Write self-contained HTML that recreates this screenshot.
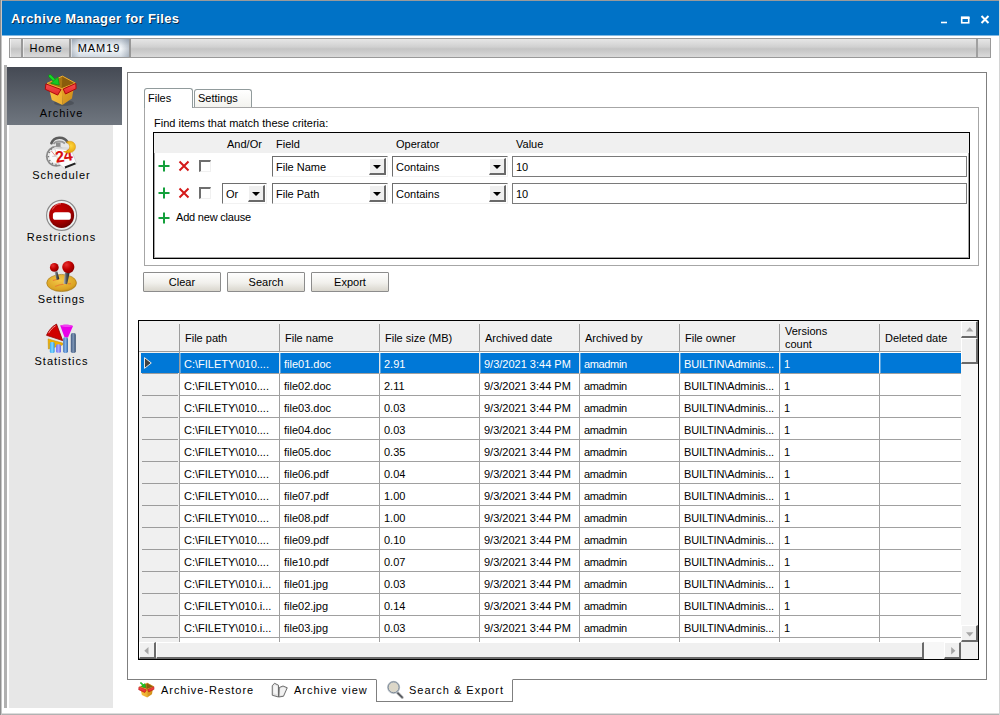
<!DOCTYPE html>
<html><head><meta charset="utf-8"><title>Archive Manager for Files</title>
<style>
*{box-sizing:border-box}
html,body{margin:0;padding:0}
body{width:1000px;height:715px;overflow:hidden;background:#fff;font-family:"Liberation Sans",sans-serif;font-size:11px;color:#000;position:relative}
.abs,.abs>*{position:absolute}
#win{left:0;top:0;width:1000px;height:715px;background:linear-gradient(90deg,#8e8e8e 1px,#c6c6c6 1px,#c6c6c6 2px,rgba(255,255,255,0) 2px) , linear-gradient(270deg,#d4d4d4 1px,rgba(255,255,255,0) 1px), linear-gradient(0deg,#b2b2b2 1px,#dcdcdc 1px,#dcdcdc 2px,rgba(255,255,255,0) 2px), linear-gradient(180deg,#9a9a9a 1px,rgba(255,255,255,0) 1px)}
#title{left:2px;top:1px;width:997px;height:35px;background:linear-gradient(#0072c6 34px,#7fb8e2 34px)}
#title .t{left:9px;top:10px;font-size:13px;font-weight:bold;color:#fff;letter-spacing:.38px;text-shadow:1px 1px 0 #0a2a4a;white-space:nowrap}
#tb{left:9px;top:38px;width:982px;height:20px;border:1px solid #999;background:linear-gradient(#e6e6e6,#d0d0d0 45%,#c4c4c4 55%,#dadada)}
.tbi{top:0;height:18px;font-size:11px;letter-spacing:.9px;line-height:18px;text-align:center;border-right:2px solid #989898;box-shadow:inset 1px 0 0 rgba(255,255,255,.55)}
#side{left:9px;top:67px;width:104px;height:641px;background:#e7e7e7}
#sbar{left:4px;top:65px;width:3px;height:643px;background:#b0b0b0}
#selitem{left:7px;top:67px;width:115px;height:58px;background:linear-gradient(#454a54,#6f767f)}
.sl{left:1px;width:121px;text-align:center;font-size:11px;letter-spacing:1px;white-space:nowrap}
#panel{left:127px;top:72px;width:860px;height:608px;border:1px solid #7f7f7f;background:#fff}
/* tabs */
.tab{border:1px solid #919b9c;border-bottom:none;border-radius:3px 3px 0 0;background:linear-gradient(#fff,#f3f3ef);padding:0 0 0 3px;line-height:14px}
#tpage{left:144px;top:107px;width:835px;height:159px;border:1px solid #a6a6a6;background:#fff}
#crit{left:153px;top:132px;width:817px;height:127px;border:1px solid #000;box-shadow:inset 0 0 0 1px rgba(0,0,0,.35);background:#fff}
#crith{left:154px;top:133px;width:815px;height:20px;background:#f0f0f0}
.lbl{white-space:nowrap;line-height:13px}
.combo{height:21px;border:1px solid #f2f2f2;border-top-color:#6e6e6e;border-left-color:#6e6e6e;background:#fff}
.combo span{left:3px;top:4px;line-height:13px;white-space:nowrap}
.combo b{right:1px;top:1px;width:17px;height:17px;background:#efefef;border:1px solid #fff;border-right:2px solid #6a6a6a;border-bottom:2px solid #6a6a6a}
.combo b:after{content:"";position:absolute;left:3px;top:6px;border:4px solid transparent;border-top:4.5px solid #000;border-bottom:none}
.txt{height:21px;border:1px solid #7a7a7a;background:#fff}
.txt span{left:3px;top:4px;line-height:13px}
.chk{width:12px;height:12px;border:1px solid #f0f0f0;border-top:2px solid #6e6e6e;border-left:2px solid #6e6e6e;background:#fff}
.btn{width:78px;height:20px;top:272px;border:1px solid #8c8c8c;background:linear-gradient(#fefefe,#f1f0ec 55%,#d9d6cd);text-align:center;line-height:18px;border-radius:1px}
/* grid */
#gridb{left:138px;top:320px;width:841px;height:340px;border:1px solid #000;box-shadow:inset 0 0 0 1px rgba(0,0,0,.4);background:#fff}
#grid{overflow:hidden}
.gh{background:#f0f0f0;border-bottom:1px solid #9c9c9c}
.hc{top:3px;height:28px;border-right:1px solid #9c9c9c;padding-left:6px;line-height:13px;white-space:nowrap}
.hc span{position:absolute;left:5px;top:8px}
.hc.two span{top:1px}
.row{left:0;width:822px;height:22px}
.row .rh{left:0;top:0;width:41px;height:22px;background:#f0f0f0;border-right:1px solid #9c9c9c}
.row .rh:after{content:"";position:absolute;left:3px;right:1px;bottom:0;height:1px;background:#9c9c9c}
.row .c{top:0;height:22px;border-right:1px solid #a0a0a0;border-bottom:1px solid #a0a0a0;padding-left:4px;line-height:13px;padding-top:6px;white-space:nowrap;overflow:hidden}
.row.sel .c{background:#0078d7;color:#fff;border-bottom-color:#a0a0a0;border-right-color:#e6e6e6}
.row.sel .c{box-shadow:inset 0 1px 0 #fff, inset 1px 0 0 #5aa6e4}
.row.sel .rh:before{content:"";position:absolute;left:2px;top:1px;right:0;bottom:1px;background:#0078d7}
.row .c.last{border-right:none}
/* scrollbars */
.sb{background:#f7f7f7}
.sbtn svg{position:absolute}
.sbtn{background:#f0f0f0;border:1px solid #fff;border-right:2px solid #6a6a6a;border-bottom:2px solid #6a6a6a}
/* bottom tabs */
.bt{top:680px;height:22px;font-size:11px;letter-spacing:1px;white-space:nowrap;line-height:20px}
</style></head><body>
<div id="win" class="abs"></div>
<div id="title" class="abs"><div class="t">Archive Manager for Files</div>
<svg style="left:936px;top:12px" width="56" height="14" viewBox="0 0 56 14"><g fill="none" stroke="#fff" stroke-width="1.6"><path d="M3 9.5h6"/><rect x="23.7" y="4.2" width="7" height="5.6"/><path d="M23 5h8.5" stroke-width="2"/><path d="M43.5 3l7 7M50.5 3l-7 7" stroke-width="2"/></g></svg>
</div>
<div id="tb" class="abs">
 <div class="tbi" style="left:0;width:13px"></div>
 <div class="tbi" style="left:13px;width:48px">Home</div>
 <div class="tbi" style="left:61px;width:60px;padding-right:2px;background:linear-gradient(90deg,rgba(90,105,125,.35),rgba(90,105,125,0) 14%,rgba(90,105,125,0) 86%,rgba(90,105,125,.35)),linear-gradient(#b6bfca,#e6ebf0 35%,#f4f7fa 55%,#d2dae2)">MAM19</div>
 <div class="tbi" style="left:966px;width:2px;border-right:2px solid #a0a0a0"></div>
</div>
<div id="sbar" class="abs"></div>
<div id="side" class="abs"></div>
<div id="selitem" class="abs"></div>
<div class="abs" style="left:0;top:0">
 <div class="sl" style="top:107px">Archive</div>
 <div class="sl" style="top:169px">Scheduler</div>
 <div class="sl" style="top:231px">Restrictions</div>
 <div class="sl" style="top:293px">Settings</div>
 <div class="sl" style="top:355px">Statistics</div>
</div>
<div class="abs" style="left:0;top:0;z-index:5">
<svg width="0" height="0" style="position:absolute"><defs>
 <linearGradient id="gyl" x1="0" y1="0" x2="1" y2="0"><stop offset="0" stop-color="#f6c040"/><stop offset="1" stop-color="#eeb030"/></linearGradient>
 <linearGradient id="gyr" x1="0" y1="0" x2="1" y2="1"><stop offset="0" stop-color="#e8a828"/><stop offset="1" stop-color="#c88818"/></linearGradient>
 <linearGradient id="gred" x1="0" y1="0" x2="0" y2="1"><stop offset="0" stop-color="#f85050"/><stop offset="1" stop-color="#e02828"/></linearGradient>
 <radialGradient id="gstop" cx=".4" cy=".3" r=".75"><stop offset="0" stop-color="#c80000"/><stop offset=".6" stop-color="#a80000"/><stop offset="1" stop-color="#6a0000"/></radialGradient>
 <radialGradient id="gball" cx=".35" cy=".3" r=".8"><stop offset="0" stop-color="#e83030"/><stop offset=".5" stop-color="#c00000"/><stop offset="1" stop-color="#800000"/></radialGradient>
 <radialGradient id="gbase" cx=".45" cy=".35" r=".75"><stop offset="0" stop-color="#f4c848"/><stop offset=".7" stop-color="#dca424"/><stop offset="1" stop-color="#a87410"/></radialGradient>
 <linearGradient id="gstick" x1="0" y1="0" x2="1" y2="0"><stop offset="0" stop-color="#c0c4c8"/><stop offset=".5" stop-color="#50545a"/><stop offset="1" stop-color="#202428"/></linearGradient>
 <radialGradient id="gmoon" cx=".6" cy=".4" r=".7"><stop offset="0" stop-color="#ffd840"/><stop offset="1" stop-color="#e09800"/></radialGradient>
 <linearGradient id="gb1" x1="0" y1="0" x2="1" y2="0"><stop offset="0" stop-color="#38a0f0"/><stop offset=".5" stop-color="#80dcff"/><stop offset="1" stop-color="#2890e0"/></linearGradient>
 <linearGradient id="gb2" x1="0" y1="0" x2="1" y2="0"><stop offset="0" stop-color="#7070f0"/><stop offset=".5" stop-color="#a8a8ff"/><stop offset="1" stop-color="#6868e0"/></linearGradient>
 <linearGradient id="gb3" x1="0" y1="0" x2="1" y2="0"><stop offset="0" stop-color="#4878b8"/><stop offset=".5" stop-color="#80b0e8"/><stop offset="1" stop-color="#3868a8"/></linearGradient>
 <linearGradient id="gb4" x1="0" y1="0" x2="1" y2="0"><stop offset="0" stop-color="#405880"/><stop offset=".5" stop-color="#8098b8"/><stop offset="1" stop-color="#304868"/></linearGradient>
 </defs></svg>
<!-- archive -->
<svg style="left:44px;top:74px;overflow:visible" width="34" height="34"><ellipse cx="20" cy="29" rx="10" ry="3" fill="#000" opacity=".18"/><g>
  <path d="M3 9.4L18.4 2.1 31.3 9.1 17.8 14.6z" fill="#a87414"/>
  <path d="M18.4 2.1L31.3 9.1 17.8 14.6z" fill="#8a5c0c"/>
  <path d="M3 9.4L18.4 2.1 31.3 9.1 17.8 14.6z" fill="none" stroke="#f0b030" stroke-width="1"/>
  <path d="M4 10L17.8 14.4 18.4 30.9 7.8 25.9z" fill="url(#gyl)"/>
  <path d="M17.8 14.4L30.6 9.6 27.9 24.5 18.4 30.9z" fill="url(#gyr)"/>
  <path d="M1.9 9.9L17 15.5 13.7 21.1 1.3 15.3z" fill="url(#gred)" stroke="#b00808" stroke-width="1"/>
  <path d="M19.2 15L31.8 9.4 32.1 14.7 21.5 20z" fill="url(#gred)" stroke="#b00808" stroke-width="1"/>
  <path d="M6 2L12 8" stroke="#0a9a14" stroke-width="3.2" stroke-linecap="round"/>
  <path d="M6 2L12 8" stroke="#18dc28" stroke-width="2" stroke-linecap="round"/>
  <path d="M13.9 2.9L15.3 11.1 6.9 9.4z" fill="#14c824" stroke="#0a9a14" stroke-width=".8"/>
 </g></svg>
<!-- scheduler: origin 40,132 -->
<svg style="left:40px;top:132px;overflow:visible" width="40" height="40">
 <path d="M11.4 11.2C14 4.2 24 4 27.4 10" fill="none" stroke="#5c5c5c" stroke-width="2.6" stroke-linecap="round"/>
 <path d="M13.5 12C16 8.6 22 8.6 25 11.5" fill="none" stroke="#9a9a9a" stroke-width="1.8"/>
 <rect x="16" y="10.5" width="4.5" height="4" fill="#8c8c8c"/>
 <circle cx="16.3" cy="24.3" r="9.6" fill="#f2f2f2" stroke="#8a8a8a" stroke-width="1.8"/>
 <circle cx="16.3" cy="24.3" r="7.5" fill="#fafafa" stroke="#d0d0d0" stroke-width=".6"/>
 <g stroke="#777" stroke-width="1.2"><path d="M8.5 20l1.5 .7M7.6 24.6h1.6M9 29l1.4-.8M12 32.3l.8-1.4M16 33.4v-1.6M10.8 16.5l1 1.2"/></g>
 <path d="M15.7 24.3L11.4 19" stroke="#d04040" stroke-width=".6"/><path d="M15.7 24.3h-3.5" stroke="#aaa" stroke-width=".6"/>
 <path d="M14.5 15L30.8 16.5 36.7 31.6 24.3 36.6 18.6 31.4z" fill="#fcfcfc" stroke="#c8c8c8" stroke-width=".7"/>
 <path d="M15 15.2l15.4 1.5 .5 1.6-15.4-1.4z" fill="#d8d8d8"/>
 <path d="M24.6 34.6L35 30.4 35.9 32.2 25.2 36.4z" fill="#222"/>
 <text x="15.6" y="29.6" font-family="Liberation Sans,sans-serif" font-size="16" font-weight="bold" fill="#d81010" transform="rotate(-9 24 26)" letter-spacing="-.6">24</text>
 <path d="M26.3 10C31.5 7.6 36.2 11 35.4 15.8 34.6 20.6 28 22.3 23.5 19.6 29.8 19.6 32.2 13.4 26.3 10z" fill="url(#gmoon)" stroke="#d89000" stroke-width=".5"/>
</svg>
<!-- restrictions: center 61.6,214.4 -->
<svg style="left:44px;top:198px;overflow:visible" width="36" height="36">
 <circle cx="17.6" cy="17.4" r="15" fill="#f4f6f6" stroke="#8c8c8c" stroke-width="1.2"/>
 <circle cx="17.6" cy="17.4" r="13.2" fill="#dfe4e4"/>
 <circle cx="17.6" cy="17.4" r="12.5" fill="url(#gstop)"/>
 <path d="M8.5 11.5C10.5 7.5 14 5.8 17 5.8" stroke="#ff9090" stroke-width="1" fill="none" opacity=".7"/>
 <rect x="8.9" y="14.3" width="17.9" height="7.5" rx="2.6" fill="#fff"/>
</svg>
<!-- settings: origin 44,258 -->
<svg style="left:44px;top:258px;overflow:visible" width="36" height="36">
 <ellipse cx="17.6" cy="25" rx="14.9" ry="8.6" fill="url(#gbase)" stroke="#a07414" stroke-width=".6"/>
 <path d="M8.9 22.6C11 21.6 13 21.3 15 21.2M11.1 28.4C14 27 17 26.4 19.5 26.2M24 25.9l3-.3" stroke="#e88030" stroke-width="1.1" fill="none"/>
 <path d="M10.4 13.5l3 0 1.9 7.6-2.6 1z" fill="url(#gstick)"/>
 <path d="M21 14.5l4.6 .5-2.5 11.2-3.6-.4z" fill="url(#gstick)"/>
 <circle cx="10.3" cy="9.4" r="4.4" fill="url(#gball)"/>
 <circle cx="24.3" cy="9.1" r="6.1" fill="url(#gball)"/>
</svg>
<!-- statistics: origin 44,320 -->
<svg style="left:44px;top:320px;overflow:visible" width="36" height="36">
 <path d="M4.1 18.9L18.7 23.1 18.5 25 4.4 29z" fill="#f0b000" stroke="#c08800" stroke-width=".5"/>
 <path d="M12.5 4.1L18.7 20.6 2.5 15.3C4.5 10.5 8 6.5 12.5 4.1z" fill="#d00000" stroke="#900000" stroke-width=".8"/>
 <path d="M4.6 13.2C6.5 9.8 9 7.4 11.6 5.8" stroke="#ffb0b0" stroke-width=".8" fill="none"/>
 <path d="M16.2 5.5C19 4.2 26 4.4 29 6.1L24 17.5 20.6 17.5z" fill="#e800e8"/>
 <path d="M16.2 5.5C19 4.2 26 4.4 29 6.1 26 7.6 19 7.4 16.2 5.5z" fill="#f040f0"/>
 <rect x="5.8" y="22" width="4.8" height="11" rx="1.6" fill="url(#gb1)"/>
 <rect x="12.1" y="24.2" width="4.9" height="8.6" rx="1.6" fill="url(#gb2)"/>
 <rect x="19.1" y="17.3" width="4.9" height="15.7" rx="1.8" fill="url(#gb3)"/>
 <rect x="26.8" y="13.1" width="5" height="19.9" rx="1.8" fill="url(#gb4)"/>
</svg>
<!-- bottom: small box at 138,682 -->
<svg style="left:137.5px;top:681.5px;overflow:visible" width="17" height="17"><g transform="scale(.5)"><g>
  <path d="M3 9.4L18.4 2.1 31.3 9.1 17.8 14.6z" fill="#a87414"/>
  <path d="M18.4 2.1L31.3 9.1 17.8 14.6z" fill="#8a5c0c"/>
  <path d="M3 9.4L18.4 2.1 31.3 9.1 17.8 14.6z" fill="none" stroke="#f0b030" stroke-width="1"/>
  <path d="M4 10L17.8 14.4 18.4 30.9 7.8 25.9z" fill="url(#gyl)"/>
  <path d="M17.8 14.4L30.6 9.6 27.9 24.5 18.4 30.9z" fill="url(#gyr)"/>
  <path d="M1.9 9.9L17 15.5 13.7 21.1 1.3 15.3z" fill="url(#gred)" stroke="#b00808" stroke-width="1"/>
  <path d="M19.2 15L31.8 9.4 32.1 14.7 21.5 20z" fill="url(#gred)" stroke="#b00808" stroke-width="1"/>
  <path d="M6 2L12 8" stroke="#0a9a14" stroke-width="3.2" stroke-linecap="round"/>
  <path d="M6 2L12 8" stroke="#18dc28" stroke-width="2" stroke-linecap="round"/>
  <path d="M13.9 2.9L15.3 11.1 6.9 9.4z" fill="#14c824" stroke="#0a9a14" stroke-width=".8"/>
 </g></g></svg>
<!-- book origin 270,681 -->
<svg style="left:270px;top:681px;overflow:visible" width="20" height="18">
 <path d="M2.25 4.75L4.5 2.25 8.5 4.25 8.5 16 2.25 14.25z" fill="#e2e2e2" stroke="#606060" stroke-width=".9" stroke-linejoin="round"/>
 <path d="M9.25 6.5L13 5 17.25 6.75 13.5 15.25 8.75 16z" fill="#dedede" stroke="#606060" stroke-width=".9" stroke-linejoin="round"/>
 <path d="M3.5 5.5L5 4 7.3 5.4 7.3 13.2 3.5 12.2z" fill="#f6f6f6"/><path d="M10.2 7.4L13 6.2 16 7.4 13 14 10 14.4z" fill="#f2f2f2"/>
</svg>
<!-- magnifier origin 384,678 -->
<svg style="left:384px;top:678px;overflow:visible" width="22" height="22">
 <path d="M13.4 14.6L18.3 19.5" stroke="#b8b8b8" stroke-width="3" stroke-linecap="round"/>
 <path d="M13 14.2L18.1 19.3" stroke="#50545a" stroke-width="1.6" stroke-linecap="round"/>
 <circle cx="9.6" cy="9.3" r="5.7" fill="#dcd7c8" stroke="#c8ced4" stroke-width="1.8"/>
 <circle cx="9.6" cy="9.3" r="5.5" fill="none" stroke="#7c8894" stroke-width="1"/>
</svg>

</div>
<div id="panel" class="abs"></div>
<div class="abs" style="left:0;top:0">
 <div class="tab" style="left:194px;top:89px;width:58px;height:18px;padding-top:1px">Settings</div>
 <div id="tpage"></div>
 <div class="tab" style="left:144px;top:88px;width:49px;height:20px;padding-top:2px;background:#fff">Files</div>
 <div class="lbl" style="left:154px;top:117px">Find items that match these criteria:</div>
 <div id="crit"></div><div id="crith"></div>
 <div class="lbl" style="left:227px;top:138px">And/Or</div>
 <div class="lbl" style="left:276px;top:138px">Field</div>
 <div class="lbl" style="left:396px;top:138px">Operator</div>
 <div class="lbl" style="left:516px;top:138px">Value</div>
 <!-- row1 -->
 <svg style="left:158px;top:160px" width="12" height="12"><path d="M6 .5v11M.5 6h11" stroke="#14a03c" stroke-width="2" fill="none"/></svg>
 <svg style="left:178px;top:160px" width="12" height="12"><path d="M1.5 1.5l9 9M10.5 1.5l-9 9" stroke="#d41a1a" stroke-width="2" fill="none"/></svg>
 <div class="chk" style="left:199px;top:160px"></div>
 <div class="combo abs" style="left:272px;top:156px;width:116px"><span>File Name</span><b></b></div>
 <div class="combo abs" style="left:392px;top:156px;width:116px"><span>Contains</span><b></b></div>
 <div class="txt abs" style="left:512px;top:156px;width:455px"><span>10</span></div>
 <!-- row2 -->
 <svg style="left:158px;top:187px" width="12" height="12"><path d="M6 .5v11M.5 6h11" stroke="#14a03c" stroke-width="2" fill="none"/></svg>
 <svg style="left:178px;top:187px" width="12" height="12"><path d="M1.5 1.5l9 9M10.5 1.5l-9 9" stroke="#d41a1a" stroke-width="2" fill="none"/></svg>
 <div class="chk" style="left:199px;top:187px"></div>
 <div class="combo abs" style="left:222px;top:183px;width:45px"><span>Or</span><b></b></div>
 <div class="combo abs" style="left:272px;top:183px;width:116px"><span>File Path</span><b></b></div>
 <div class="combo abs" style="left:392px;top:183px;width:116px"><span>Contains</span><b></b></div>
 <div class="txt abs" style="left:512px;top:183px;width:455px"><span>10</span></div>
 <svg style="left:158px;top:212px" width="12" height="12"><path d="M6 .5v11M.5 6h11" stroke="#14a03c" stroke-width="2" fill="none"/></svg>
 <div class="lbl" style="left:176px;top:211px;letter-spacing:-.2px">Add new clause</div>
 <div class="btn" style="left:143px">Clear</div>
 <div class="btn" style="left:227px">Search</div>
 <div class="btn" style="left:311px">Export</div>
</div>
<div id="gridb" class="abs"></div>
<div id="grid" class="abs" style="left:139px;top:321px;width:822px;height:321px">
<div class="gh" style="left:0;top:0;width:822px;height:31px"></div>
<div class="hc" style="left:0;width:41px"></div>
<div class="hc" style="left:41px;width:100px"><span>File path</span></div>
<div class="hc" style="left:141px;width:100px"><span>File name</span></div>
<div class="hc" style="left:241px;width:100px"><span>File size (MB)</span></div>
<div class="hc" style="left:341px;width:100px"><span>Archived date</span></div>
<div class="hc" style="left:441px;width:100px"><span>Archived by</span></div>
<div class="hc" style="left:541px;width:100px"><span>File owner</span></div>
<div class="hc two" style="left:641px;width:100px"><span>Versions<br>count</span></div>
<div class="hc" style="left:741px;width:82px"><span>Deleted date</span></div>
<div class="row abs sel" style="top:31px">
<div class="rh"><svg style="position:absolute;left:4px;top:4px;z-index:2" width="10" height="14"><path d="M1.5 1.6L8.3 7 1.5 12.4z" fill="#404040" stroke="#e8e8e8" stroke-width="1"/></svg></div>
<div class="c" style="left:41px;width:100px">C:\FILETY\010....</div>
<div class="c" style="left:141px;width:100px">file01.doc</div>
<div class="c" style="left:241px;width:100px">2.91</div>
<div class="c" style="left:341px;width:100px">9/3/2021 3:44 PM</div>
<div class="c" style="left:441px;width:100px;letter-spacing:-.35px">amadmin</div>
<div class="c" style="left:541px;width:100px;letter-spacing:-.15px">BUILTIN\Adminis...</div>
<div class="c" style="left:641px;width:100px">1</div>
<div class="c last" style="left:741px;width:82px"></div>
</div>
<div class="row abs" style="top:53px">
<div class="rh"></div>
<div class="c" style="left:41px;width:100px">C:\FILETY\010....</div>
<div class="c" style="left:141px;width:100px">file02.doc</div>
<div class="c" style="left:241px;width:100px">2.11</div>
<div class="c" style="left:341px;width:100px">9/3/2021 3:44 PM</div>
<div class="c" style="left:441px;width:100px;letter-spacing:-.35px">amadmin</div>
<div class="c" style="left:541px;width:100px;letter-spacing:-.15px">BUILTIN\Adminis...</div>
<div class="c" style="left:641px;width:100px">1</div>
<div class="c last" style="left:741px;width:82px"></div>
</div>
<div class="row abs" style="top:75px">
<div class="rh"></div>
<div class="c" style="left:41px;width:100px">C:\FILETY\010....</div>
<div class="c" style="left:141px;width:100px">file03.doc</div>
<div class="c" style="left:241px;width:100px">0.03</div>
<div class="c" style="left:341px;width:100px">9/3/2021 3:44 PM</div>
<div class="c" style="left:441px;width:100px;letter-spacing:-.35px">amadmin</div>
<div class="c" style="left:541px;width:100px;letter-spacing:-.15px">BUILTIN\Adminis...</div>
<div class="c" style="left:641px;width:100px">1</div>
<div class="c last" style="left:741px;width:82px"></div>
</div>
<div class="row abs" style="top:97px">
<div class="rh"></div>
<div class="c" style="left:41px;width:100px">C:\FILETY\010....</div>
<div class="c" style="left:141px;width:100px">file04.doc</div>
<div class="c" style="left:241px;width:100px">0.03</div>
<div class="c" style="left:341px;width:100px">9/3/2021 3:44 PM</div>
<div class="c" style="left:441px;width:100px;letter-spacing:-.35px">amadmin</div>
<div class="c" style="left:541px;width:100px;letter-spacing:-.15px">BUILTIN\Adminis...</div>
<div class="c" style="left:641px;width:100px">1</div>
<div class="c last" style="left:741px;width:82px"></div>
</div>
<div class="row abs" style="top:119px">
<div class="rh"></div>
<div class="c" style="left:41px;width:100px">C:\FILETY\010....</div>
<div class="c" style="left:141px;width:100px">file05.doc</div>
<div class="c" style="left:241px;width:100px">0.35</div>
<div class="c" style="left:341px;width:100px">9/3/2021 3:44 PM</div>
<div class="c" style="left:441px;width:100px;letter-spacing:-.35px">amadmin</div>
<div class="c" style="left:541px;width:100px;letter-spacing:-.15px">BUILTIN\Adminis...</div>
<div class="c" style="left:641px;width:100px">1</div>
<div class="c last" style="left:741px;width:82px"></div>
</div>
<div class="row abs" style="top:141px">
<div class="rh"></div>
<div class="c" style="left:41px;width:100px">C:\FILETY\010....</div>
<div class="c" style="left:141px;width:100px">file06.pdf</div>
<div class="c" style="left:241px;width:100px">0.04</div>
<div class="c" style="left:341px;width:100px">9/3/2021 3:44 PM</div>
<div class="c" style="left:441px;width:100px;letter-spacing:-.35px">amadmin</div>
<div class="c" style="left:541px;width:100px;letter-spacing:-.15px">BUILTIN\Adminis...</div>
<div class="c" style="left:641px;width:100px">1</div>
<div class="c last" style="left:741px;width:82px"></div>
</div>
<div class="row abs" style="top:163px">
<div class="rh"></div>
<div class="c" style="left:41px;width:100px">C:\FILETY\010....</div>
<div class="c" style="left:141px;width:100px">file07.pdf</div>
<div class="c" style="left:241px;width:100px">1.00</div>
<div class="c" style="left:341px;width:100px">9/3/2021 3:44 PM</div>
<div class="c" style="left:441px;width:100px;letter-spacing:-.35px">amadmin</div>
<div class="c" style="left:541px;width:100px;letter-spacing:-.15px">BUILTIN\Adminis...</div>
<div class="c" style="left:641px;width:100px">1</div>
<div class="c last" style="left:741px;width:82px"></div>
</div>
<div class="row abs" style="top:185px">
<div class="rh"></div>
<div class="c" style="left:41px;width:100px">C:\FILETY\010....</div>
<div class="c" style="left:141px;width:100px">file08.pdf</div>
<div class="c" style="left:241px;width:100px">1.00</div>
<div class="c" style="left:341px;width:100px">9/3/2021 3:44 PM</div>
<div class="c" style="left:441px;width:100px;letter-spacing:-.35px">amadmin</div>
<div class="c" style="left:541px;width:100px;letter-spacing:-.15px">BUILTIN\Adminis...</div>
<div class="c" style="left:641px;width:100px">1</div>
<div class="c last" style="left:741px;width:82px"></div>
</div>
<div class="row abs" style="top:207px">
<div class="rh"></div>
<div class="c" style="left:41px;width:100px">C:\FILETY\010....</div>
<div class="c" style="left:141px;width:100px">file09.pdf</div>
<div class="c" style="left:241px;width:100px">0.10</div>
<div class="c" style="left:341px;width:100px">9/3/2021 3:44 PM</div>
<div class="c" style="left:441px;width:100px;letter-spacing:-.35px">amadmin</div>
<div class="c" style="left:541px;width:100px;letter-spacing:-.15px">BUILTIN\Adminis...</div>
<div class="c" style="left:641px;width:100px">1</div>
<div class="c last" style="left:741px;width:82px"></div>
</div>
<div class="row abs" style="top:229px">
<div class="rh"></div>
<div class="c" style="left:41px;width:100px">C:\FILETY\010....</div>
<div class="c" style="left:141px;width:100px">file10.pdf</div>
<div class="c" style="left:241px;width:100px">0.07</div>
<div class="c" style="left:341px;width:100px">9/3/2021 3:44 PM</div>
<div class="c" style="left:441px;width:100px;letter-spacing:-.35px">amadmin</div>
<div class="c" style="left:541px;width:100px;letter-spacing:-.15px">BUILTIN\Adminis...</div>
<div class="c" style="left:641px;width:100px">1</div>
<div class="c last" style="left:741px;width:82px"></div>
</div>
<div class="row abs" style="top:251px">
<div class="rh"></div>
<div class="c" style="left:41px;width:100px">C:\FILETY\010.i...</div>
<div class="c" style="left:141px;width:100px">file01.jpg</div>
<div class="c" style="left:241px;width:100px">0.03</div>
<div class="c" style="left:341px;width:100px">9/3/2021 3:44 PM</div>
<div class="c" style="left:441px;width:100px;letter-spacing:-.35px">amadmin</div>
<div class="c" style="left:541px;width:100px;letter-spacing:-.15px">BUILTIN\Adminis...</div>
<div class="c" style="left:641px;width:100px">1</div>
<div class="c last" style="left:741px;width:82px"></div>
</div>
<div class="row abs" style="top:273px">
<div class="rh"></div>
<div class="c" style="left:41px;width:100px">C:\FILETY\010.i...</div>
<div class="c" style="left:141px;width:100px">file02.jpg</div>
<div class="c" style="left:241px;width:100px">0.14</div>
<div class="c" style="left:341px;width:100px">9/3/2021 3:44 PM</div>
<div class="c" style="left:441px;width:100px;letter-spacing:-.35px">amadmin</div>
<div class="c" style="left:541px;width:100px;letter-spacing:-.15px">BUILTIN\Adminis...</div>
<div class="c" style="left:641px;width:100px">1</div>
<div class="c last" style="left:741px;width:82px"></div>
</div>
<div class="row abs" style="top:295px">
<div class="rh"></div>
<div class="c" style="left:41px;width:100px">C:\FILETY\010.i...</div>
<div class="c" style="left:141px;width:100px">file03.jpg</div>
<div class="c" style="left:241px;width:100px">0.03</div>
<div class="c" style="left:341px;width:100px">9/3/2021 3:44 PM</div>
<div class="c" style="left:441px;width:100px;letter-spacing:-.35px">amadmin</div>
<div class="c" style="left:541px;width:100px;letter-spacing:-.15px">BUILTIN\Adminis...</div>
<div class="c" style="left:641px;width:100px">1</div>
<div class="c last" style="left:741px;width:82px"></div>
</div>
<div class="row abs" style="top:317px">
<div class="rh"></div>
<div class="c" style="left:41px;width:100px"></div>
<div class="c" style="left:141px;width:100px"></div>
<div class="c" style="left:241px;width:100px"></div>
<div class="c" style="left:341px;width:100px"></div>
<div class="c" style="left:441px;width:100px;letter-spacing:-.35px"></div>
<div class="c" style="left:541px;width:100px;letter-spacing:-.15px"></div>
<div class="c" style="left:641px;width:100px"></div>
<div class="c last" style="left:741px;width:82px"></div>
</div>
</div>
<!-- scrollbars -->
<div class="abs" style="left:0;top:0">
 <div class="sb" style="left:961px;top:321px;width:17px;height:321px"></div>
 <div class="sbtn" style="left:961px;top:321px;width:17px;height:17px"><svg style="left:4px;top:5px" width="8" height="5"><path d="M0 4.5L3.7 .3 7.4 4.5z" fill="#a6a6a6"/></svg></div>
 <div class="sbtn" style="left:961px;top:338px;width:17px;height:26px"></div>
 <div class="sbtn" style="left:961px;top:625px;width:17px;height:17px"><svg style="left:3.5px;top:5.5px" width="8" height="5"><path d="M0 .2L3.7 4.4 7.4 .2z" fill="#a6a6a6"/></svg></div>
 <div class="sb" style="left:139px;top:642px;width:822px;height:17px"></div>
 <div class="sbtn" style="left:139px;top:642px;width:17px;height:17px"><svg style="left:4px;top:4px" width="5" height="8"><path d="M4.5 0L.3 3.7 4.5 7.4z" fill="#a6a6a6"/></svg></div>
 <div class="sbtn" style="left:156px;top:642px;width:768px;height:17px"></div>
 <div class="sbtn" style="left:944px;top:642px;width:17px;height:17px"><svg style="left:6px;top:4px" width="5" height="8"><path d="M.2 0L4.4 3.7 .2 7.4z" fill="#a6a6a6"/></svg></div>
 <div style="left:961px;top:642px;width:17px;height:17px;background:#f0f0f0"></div>
</div>
<!-- bottom tabs -->
<div class="abs" style="left:0;top:0">
 <div class="bt" style="left:161px;letter-spacing:.95px">Archive-Restore</div>
 <div class="bt" style="left:294px">Archive view</div>
 <div class="bt" style="left:376px;top:679px;width:137px;height:23px;border:1px solid #7f7f7f;border-top:1px solid #fff;background:#fff;padding-left:32px;line-height:21px">Search &amp; Export</div>
</div>
</body></html>
